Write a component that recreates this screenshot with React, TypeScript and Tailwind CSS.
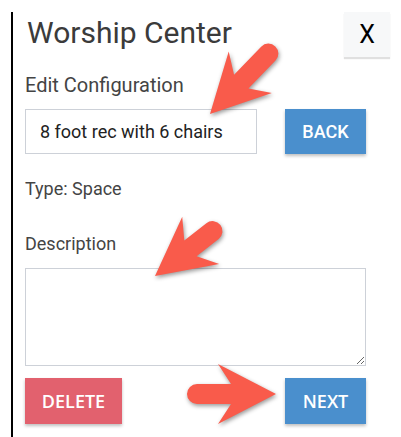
import React from "react";

type ArrowProps = { x: number; y: number; angle: number; length: number };

// red call-out arrow, tip at (x, y), pointing along `angle`
function Arrow({ x, y, angle, length }: ArrowProps) {
  const t = 10;
  const back = -(length - t);
  const d = `M0,0 L-58,30 L-45,${t} L${back},${t} A${t},${t} 0 0 1 ${back},${-t} L-45,${-t} L-58,-30 Z`;
  return (
    <path
      d={d}
      fill="#f95b4b"
      strokeLinejoin="round"
      transform={`translate(${x} ${y}) rotate(${angle})`}
    />
  );
}

export default function App() {
  return (
    <div className="relative w-[401px] h-[437px] bg-white overflow-hidden font-['Roboto',sans-serif]">
      <div className="ml-[11px] mt-[12px] h-[425px] border-l-2 border-black pl-[12px] pr-[35px] flex flex-col">
        <div className="flex items-start justify-between h-[45px]">
          <h1 className="mt-[6px] ml-[2px] text-[30px] leading-none text-[#3b3b3b] font-normal">Worship Center</h1>
          <button className="w-[46px] h-[45px] -mr-[24px] bg-[#f7f8f9] shadow-[0_2px_1px_rgba(0,0,0,0.12)] text-[25px] text-black leading-none">
            X
          </button>
        </div>

        <p className="mt-[18px] text-[20px] leading-none text-[#444]">Edit Configuration</p>

        <div className="mt-[14px] flex items-center gap-[28px]">
          <div className="w-[232px] h-[45px] border border-[#cdd1d8] px-[14px] text-[18px] leading-[43px] text-[#222]">
            8 foot rec with 6 chairs
          </div>
          <button className="w-[81px] h-[45px] bg-[#4a8fcd] text-white text-[18px] font-medium shadow-[0_2px_3px_rgba(0,0,0,0.25)]">
            BACK
          </button>
        </div>

        <p className="mt-[26px] text-[18px] leading-none text-[#444]">Type: Space</p>

        <p className="mt-[37px] text-[18px] leading-none text-[#444]">Description</p>

        <textarea className="mt-[15px] w-[341px] h-[98px] border border-[#cdd1d8] bg-white" />

        <div className="mt-[12px] flex justify-between font-['Open_Sans',sans-serif]">
          <button className="w-[97px] h-[46px] bg-[#e2616e] text-white text-[18px] font-semibold shadow-[0_2px_3px_rgba(0,0,0,0.25)]">
            DELETE
          </button>
          <button className="w-[81px] h-[46px] bg-[#4a8fcd] text-white text-[18px] font-semibold shadow-[0_2px_3px_rgba(0,0,0,0.25)]">
            NEXT
          </button>
        </div>
      </div>

      <svg
        className="absolute inset-0 pointer-events-none drop-shadow-[1px_2px_2px_rgba(0,0,0,0.4)]"
        width="401"
        height="437"
        viewBox="0 0 401 437"
      >
        <Arrow x={210} y={114} angle={134} length={94} />
        <Arrow x={155} y={276} angle={142} length={83} />
        <Arrow x={276} y={394} angle={0} length={89} />
      </svg>
    </div>
  );
}
